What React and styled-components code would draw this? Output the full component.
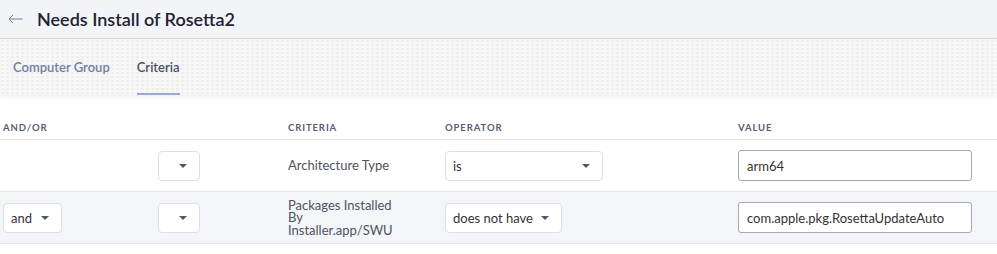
import React from "react";
import styled, { createGlobalStyle } from "styled-components";

const GlobalStyle = createGlobalStyle`
  body {
    margin: 0;
    background: #ffffff;
    font-family: Lato, "Open Sans", sans-serif;
    color: #333333;
  }
`;

const Page = styled.div`
  width: 997px;
  height: 254px;
  overflow: hidden;
  background: #ffffff;
`;

const Header = styled.header`
  display: flex;
  align-items: center;
  gap: 14px;
  height: 39px;
  padding-left: 8px;
  background: #f3f4f8;
  border-bottom: 1px solid #d6d9e0;
  box-sizing: border-box;
`;

const Title = styled.h1`
  margin: 0;
  font-size: 18px;
  font-weight: 600;
  color: #1f2230;
`;

const TabBar = styled.nav`
  display: flex;
  align-items: stretch;
  gap: 27px;
  height: 56px;
  padding-left: 13px;
  background-color: #f6f6f6;
  background-image: radial-gradient(#ebebeb 0.9px, transparent 1.4px);
  background-size: 5px 4px;
  box-shadow: 0 2px 4px rgba(0, 0, 0, 0.07);
  position: relative;
`;

const Tab = styled.div`
  display: flex;
  align-items: center;
  font-size: 13px;
  font-weight: 600;
  color: ${(p) => (p.$active ? "#4a5066" : "#6e80a6")};
  border-bottom: 2px solid ${(p) => (p.$active ? "#94acd0" : "transparent")};
  padding-top: 2px;
  box-sizing: border-box;
`;

const Table = styled.div`
  margin-top: 20px;
`;

const Row = styled.div`
  display: grid;
  grid-template-columns: 155px 130px 157px 293px 1fr;
  align-items: center;
  padding-left: 3px;
  height: ${(p) => (p.$head ? "25px" : "52px")};
  box-sizing: border-box;
  background: ${(p) => (p.$shaded ? "#f4f5f8" : "#ffffff")};
  border-bottom: 1px solid #e3e5ea;
`;

const HeadCell = styled.div`
  font-size: 9.5px;
  font-weight: 700;
  letter-spacing: 0.9px;
  color: #585d72;
  text-transform: uppercase;
`;

const Select = styled.div`
  display: flex;
  align-items: center;
  justify-content: space-between;
  width: ${(p) => p.$w}px;
  height: 30px;
  padding: 0 12px 0 7px;
  box-sizing: border-box;
  background: #ffffff;
  border: 1px solid #dcdfe6;
  border-radius: 4px;
  font-size: 13px;
  color: #333333;
`;

const Caret = styled.span`
  width: 0;
  height: 0;
  margin-left: auto;
  border-left: 4px solid transparent;
  border-right: 4px solid transparent;
  border-top: 4px solid #4f5670;
`;

const CriteriaText = styled.div`
  width: 110px;
  font-size: 13px;
  line-height: 12.5px;
  color: #4f5260;
`;

const Input = styled.div`
  display: flex;
  align-items: center;
  width: 234px;
  height: 31px;
  padding-left: 8px;
  box-sizing: border-box;
  border: 1px solid #a5a8ae;
  border-radius: 3px;
  background: #ffffff;
  font-size: 13px;
  color: #333333;
`;

const BackArrow = () => (
  <svg width="15" height="10" viewBox="0 0 15 10" fill="none">
    <path d="M14.5 5H1M5 1L1 5l4 4" stroke="#7a7e88" strokeWidth="1" />
  </svg>
);

const DropDown = ({ label, width }) => (
  <Select $w={width}>
    {label}
    <Caret />
  </Select>
);

const rows = [
  { andOr: null, criteria: "Architecture Type", op: "is", opWidth: 158, value: "arm64" },
  {
    andOr: "and",
    criteria: "Packages Installed By Installer.app/SWU",
    op: "does not have",
    opWidth: 117,
    value: "com.apple.pkg.RosettaUpdateAuto",
  },
];

export default function App() {
  return (
    <Page>
      <GlobalStyle />
      <Header>
        <BackArrow />
        <Title>Needs Install of Rosetta2</Title>
      </Header>
      <TabBar>
        <Tab>Computer Group</Tab>
        <Tab $active>Criteria</Tab>
      </TabBar>
      <Table>
        <Row $head>
          <HeadCell>And/Or</HeadCell>
          <HeadCell />
          <HeadCell>Criteria</HeadCell>
          <HeadCell>Operator</HeadCell>
          <HeadCell>Value</HeadCell>
        </Row>
        {rows.map((r, i) => (
          <Row key={i} $shaded={i % 2 === 1}>
            <div>{r.andOr && <DropDown label={r.andOr} width={59} />}</div>
            <DropDown width={42} />
            <CriteriaText>{r.criteria}</CriteriaText>
            <DropDown label={r.op} width={r.opWidth} />
            <Input>{r.value}</Input>
          </Row>
        ))}
      </Table>
    </Page>
  );
}
